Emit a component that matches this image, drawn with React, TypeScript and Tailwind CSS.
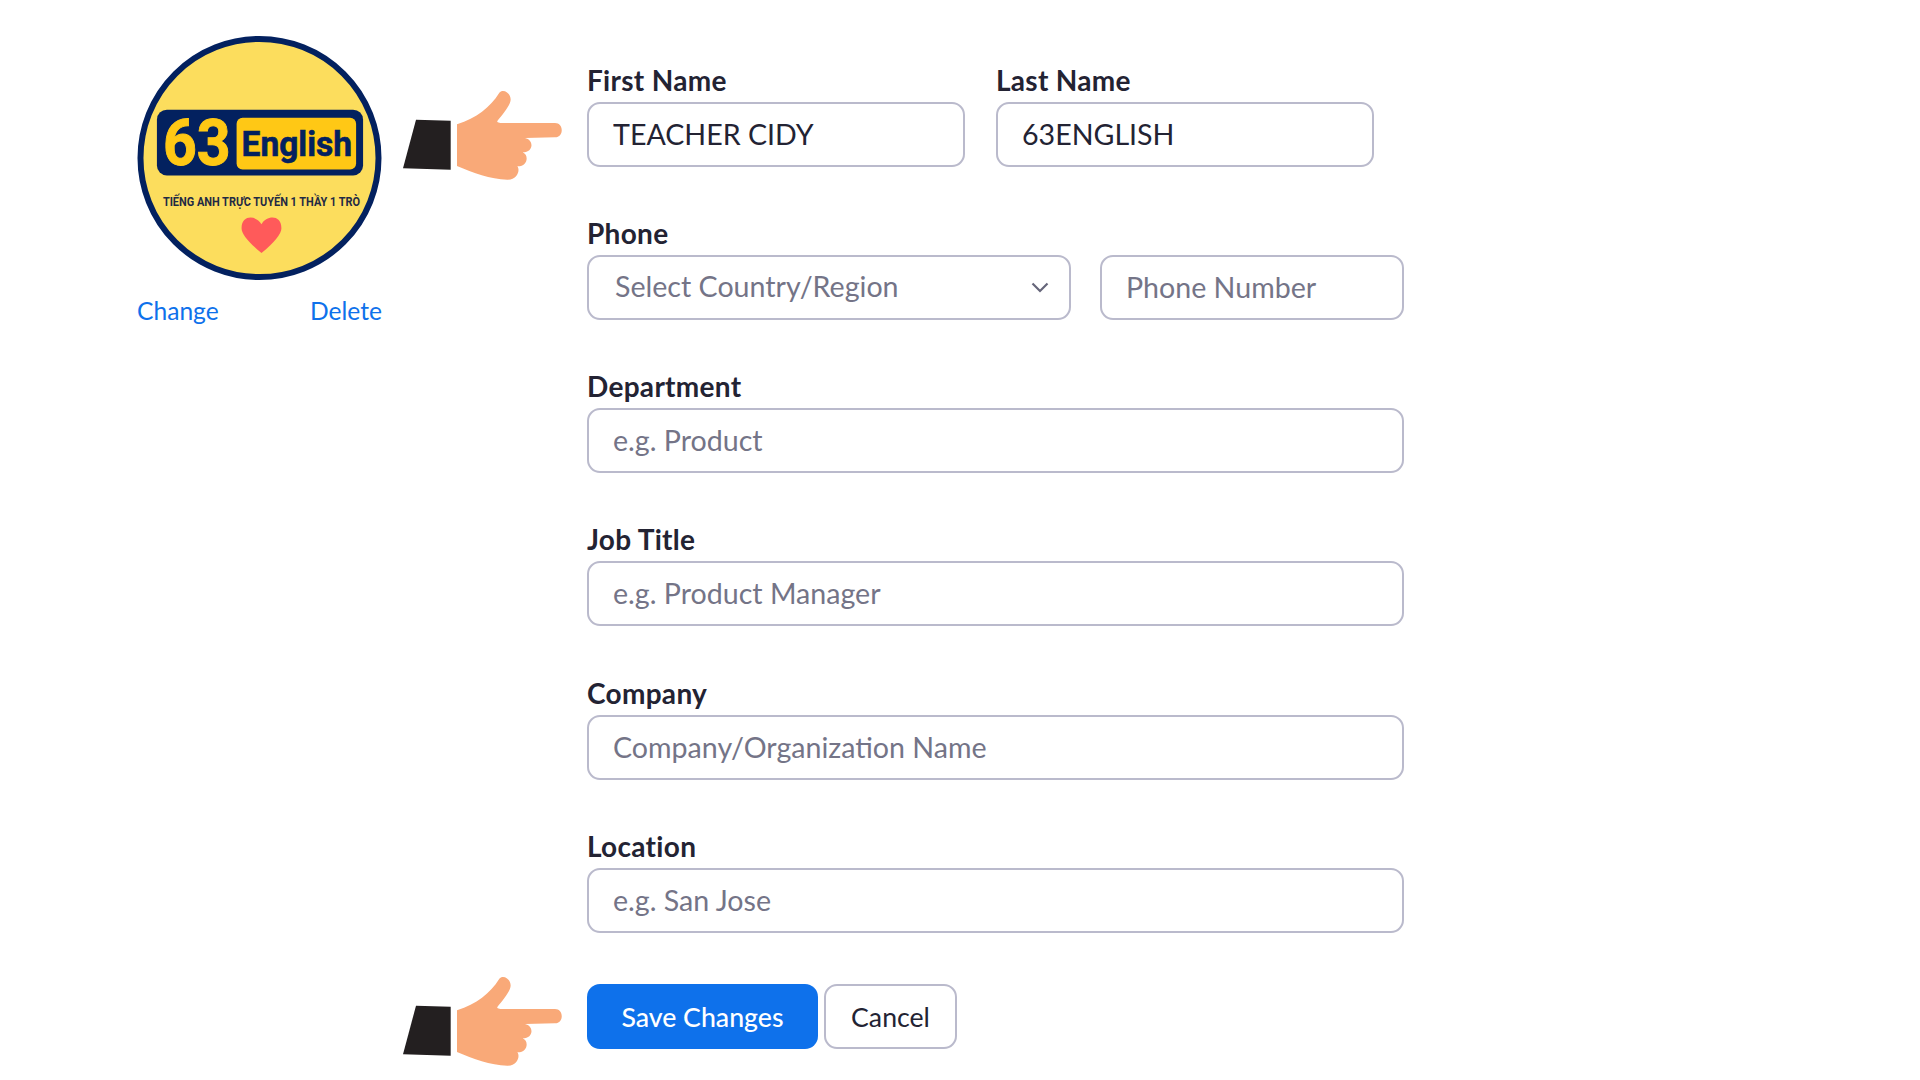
const inputClass =
  "h-[65px] rounded-[13px] border-2 border-[#BABACC] bg-white pr-[25px] pb-[2px] pl-[24px] text-[28.6px] text-[#232333] outline-none placeholder:text-[#747487]";

function Label({ children }: { children: React.ReactNode }) {
  return (
    <label className="block h-[36px] text-[28px] leading-[28px] font-bold tracking-[0.3px] text-[#232333]">
      {children}
    </label>
  );
}

function Field({
  label,
  placeholder,
  className = "mb-[52px]",
}: {
  label: string;
  placeholder: string;
  className?: string;
}) {
  return (
    <div className={className}>
      <Label>{label}</Label>
      <input className={`${inputClass} w-full`} placeholder={placeholder} />
    </div>
  );
}

// Pointing hand annotation next to the form
function Hand({ className }: { className: string }) {
  return (
    <svg
      viewBox="30 50 495 290"
      width={165}
      height={96.67}
      className={`absolute ${className}`}
    >
      <path d="M78 148 L182 151 L182 298 L39 294 Z" fill="#231F20" />
      <path
        d="M201 162 C260 142 300 112 328 67 C338 54 362 66 362 88 C360 108 335 135 322 152 C320 157 330 158 345 158 L495 158 C522 158 522 201 495 201 L405 203 C432 208 432 246 398 246 C420 256 410 290 382 288 C392 300 380 330 352 328 C300 326 250 308 201 287 Z"
        fill="#F9A978"
      />
    </svg>
  );
}

function Logo() {
  return (
    <svg viewBox="0 0 246 246" width={245} height={245} className="block">
      <circle cx="123" cy="122.5" r="119.5" fill="#FCDD5D" stroke="#03215F" strokeWidth="6" />
      <rect x="20" y="74" width="207" height="66" rx="10" fill="#03215F" />
      <rect x="100" y="82" width="120" height="52" rx="6" fill="#FFC815" />
      <text
        x="26"
        y="130"
        textLength="68"
        lengthAdjust="spacingAndGlyphs"
        fontFamily="Roboto, sans-serif"
        fontWeight="700"
        fontSize="66"
        fill="#FFC815"
        stroke="#FFC815"
        strokeWidth="1"
      >
        63
      </text>
      <text
        x="105"
        y="120"
        textLength="111"
        lengthAdjust="spacingAndGlyphs"
        fontFamily="Roboto, sans-serif"
        fontWeight="700"
        fontSize="36"
        fill="#03215F"
        stroke="#03215F"
        strokeWidth="0.6"
      >
        English
      </text>
      <text
        x="26"
        y="171"
        textLength="198"
        lengthAdjust="spacingAndGlyphs"
        fontFamily="Roboto, sans-serif"
        fontWeight="700"
        fontSize="13"
        fill="#1F2A44"
      >
        TIẾNG ANH TRỰC TUYẾN 1 THẦY 1 TRÒ
      </text>
      <path
        d="M125 218 C112 207 105 199 105 193 C105 179 120 180 125 189 C130 180 145 179 145 193 C145 199 138 207 125 218 Z"
        fill="#FF5A5A"
      />
    </svg>
  );
}

export default function App() {
  return (
    <div className="relative flex h-screen overflow-hidden bg-white pl-[137px] font-['Lato',sans-serif]">
      <div className="w-[450px] shrink-0 pt-[36px]">
        <div className="w-[245px]">
          <Logo />
          <div className="mt-[15px] flex justify-between text-[24.6px] leading-[30px] text-[#0E71EB]">
            <a>Change</a>
            <a>Delete</a>
          </div>
        </div>
      </div>

      <form className="w-[817px] shrink-0 pt-[66px]">
        <div className="mb-[52px] flex gap-[31px]">
          <div>
            <Label>First Name</Label>
            <input className={`${inputClass} w-[378px]`} defaultValue="TEACHER CIDY" />
          </div>
          <div>
            <Label>Last Name</Label>
            <input className={`${inputClass} w-[378px]`} defaultValue="63ENGLISH" />
          </div>
        </div>

        <div className="mb-[52px]">
          <Label>Phone</Label>
          <div className="flex gap-[29px]">
            <div className="flex h-[65px] w-[484px] items-center justify-between rounded-[13px] border-2 border-[#BABACC] pr-[20px] pb-[2px] pl-[26px] text-[28.6px] text-[#747487]">
              <span>Select Country/Region</span>
              <svg width="18" height="11" viewBox="0 0 18 11" fill="none" className="mt-[2px]">
                <path d="M1.5 1.5 L9 9 L16.5 1.5" stroke="#66667A" strokeWidth="2.2" />
              </svg>
            </div>
            <input className={`${inputClass} w-[304px]`} placeholder="Phone Number" />
          </div>
        </div>

        <Field label="Department" placeholder="e.g. Product" />
        <Field label="Job Title" placeholder="e.g. Product Manager" className="mb-[53px]" />
        <Field label="Company" placeholder="Company/Organization Name" />
        <Field label="Location" placeholder="e.g. San Jose" className="mb-[51px]" />

        <div className="flex gap-[6px]">
          <button
            type="button"
            className="h-[65px] w-[231px] rounded-[13px] bg-[#0E71EB] pt-[1px] text-[26.7px] font-medium text-white"
          >
            Save Changes
          </button>
          <button
            type="button"
            className="h-[65px] w-[133px] rounded-[13px] border-2 border-[#BABACC] bg-white pt-[1px] text-[26.7px] text-[#232333]"
          >
            Cancel
          </button>
        </div>
      </form>

      <Hand className="top-[87px] left-[400px]" />
      <Hand className="top-[973px] left-[400px]" />
    </div>
  );
}
